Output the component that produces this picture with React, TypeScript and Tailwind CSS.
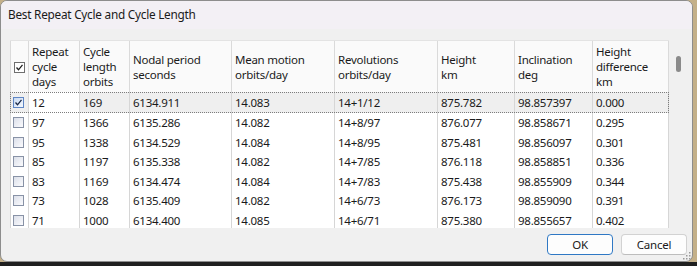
import React from "react";

const cols = [19, 51, 50, 102, 103, 103, 77, 78, 76];

const headers: string[][] = [
  [],
  ["Repeat", "cycle", "days"],
  ["Cycle", "length", "orbits"],
  ["Nodal period", "seconds"],
  ["Mean motion", "orbits/day"],
  ["Revolutions", "orbits/day"],
  ["Height", "km"],
  ["Inclination", "deg"],
  ["Height", "difference", "km"],
];

const rows: string[][] = [
  ["12", "169", "6134.911", "14.083", "14+1/12", "875.782", "98.857397", "0.000"],
  ["97", "1366", "6135.286", "14.082", "14+8/97", "876.077", "98.858671", "0.295"],
  ["95", "1338", "6134.529", "14.084", "14+8/95", "875.481", "98.856097", "0.301"],
  ["85", "1197", "6135.338", "14.082", "14+7/85", "876.118", "98.858851", "0.336"],
  ["83", "1169", "6134.474", "14.084", "14+7/83", "875.438", "98.855909", "0.344"],
  ["73", "1028", "6135.409", "14.082", "14+6/73", "876.173", "98.859090", "0.391"],
  ["71", "1000", "6134.400", "14.085", "14+6/71", "875.380", "98.855657", "0.402"],
];

function Check({ color }: { color: string }) {
  return (
    <svg width="9" height="9" viewBox="0 0 9 9" className="block">
      <polyline points="1.5,4.5 3.5,6.8 7.5,1.8" fill="none" stroke={color} strokeWidth="1.3" />
    </svg>
  );
}

function RowBox({ checked }: { checked?: boolean }) {
  return (
    <div
      className={
        "w-[11px] h-[11px] border flex items-center justify-center " +
        (checked
          ? "border-[#5f86c4] bg-gradient-to-br from-[#c9daf2] to-[#f4f8fe]"
          : "border-[#8892a6] bg-gradient-to-br from-[#dce0ea] to-[#fbfbfd]")
      }
    >
      {checked && <Check color="#1c2a48" />}
    </div>
  );
}

export default function App() {
  return (
    <div className="w-[697px] h-[266px] flex flex-col bg-[#1f1f1f] overflow-hidden text-[11.5px] tracking-[-0.25px]" style={{ fontFamily: '"Noto Sans", "Open Sans", sans-serif' }}>
      <div className="flex h-[262px] bg-[#c4b089]">
        <div className="w-[693px] h-[262px] rounded-[7px] border border-[#8d8d8d] overflow-hidden flex flex-col bg-[#f0f0f0] text-[#1a1a1a]">
          <div className="h-[28px] bg-[#f3f0f5] flex items-center pl-[7px] text-[11.8px]">
            Best Repeat Cycle and Cycle Length
          </div>
          <div className="relative flex-1 flex flex-col">
            <div className="mt-[11px] ml-[9px] w-[678px] h-[188px] flex overflow-hidden">
              <div className="w-[659px] flex flex-col leading-[15px]">
                <div className="h-[52px] flex shrink-0 border-t border-[#e3e3e3] bg-[#fafafa]">
                  {cols.map((w, i) => (
                    <div
                      key={i}
                      style={{ width: w }}
                      className="shrink-0 h-full border-r border-l-0 border-[#dadada] flex flex-col justify-center pl-[3px] first:border-l"
                    >
                      {i === 0 ? (
                        <div className="pt-[1px]">
                          <div className="w-[11px] h-[11px] border border-[#6f6f6f] bg-white flex items-center justify-center">
                            <Check color="#222" />
                          </div>
                        </div>
                      ) : (
                        headers[i].map((t, j) => <div key={j} className="whitespace-nowrap">{t}</div>)
                      )}
                    </div>
                  ))}
                </div>
                {rows.map((r, ri) => (
                  <div
                    key={ri}
                    className={
                      "flex shrink-0 " +
                      (ri === 0
                        ? "h-[21px] bg-[#efefef] outline outline-1 outline-dotted outline-[#7d7d7d] -outline-offset-1"
                        : "h-[19.5px] bg-white")
                    }
                  >
                    <div style={{ width: cols[0] }} className="shrink-0 h-full border-r border-l border-[#d6d6d6] flex items-center pl-[2px]">
                      <RowBox checked={ri === 0} />
                    </div>
                    {r.map((v, ci) => (
                      <div
                        key={ci}
                        style={{ width: cols[ci + 1] }}
                        className={
                          "shrink-0 h-full border-r border-[#d6d6d6] flex items-center pl-[3px] whitespace-nowrap " +
                          (ri === 0 && ci === 0 ? "bg-white" : "")
                        }
                      >
                        {v}
                      </div>
                    ))}
                  </div>
                ))}
              </div>
              <div className="flex-1 pt-[16px] pl-[7px]">
                <div className="w-[5px] h-[16px] rounded-full bg-[#8a8a8a]" />
              </div>
            </div>
            <div className="mt-[6px] flex justify-end gap-[8px] pr-[5px]">
              <button className="w-[66px] h-[21px] rounded-[4px] border border-[#2f78c4] bg-[#fdfdfd] flex items-center justify-center leading-none">
                OK
              </button>
              <button className="w-[66px] h-[21px] rounded-[4px] border border-[#d2d2d2] border-b-[#bdbdbd] bg-[#fdfdfd] flex items-center justify-center leading-none">
                Cancel
              </button>
            </div>
            <svg className="absolute right-[1px] bottom-[1px]" width="8" height="8" viewBox="0 0 8 8">
              <rect x="6" y="0" width="1.5" height="1.5" fill="#9a9a9a" />
              <rect x="3" y="3" width="1.5" height="1.5" fill="#9a9a9a" />
              <rect x="6" y="3" width="1.5" height="1.5" fill="#9a9a9a" />
              <rect x="0" y="6" width="1.5" height="1.5" fill="#9a9a9a" />
              <rect x="3" y="6" width="1.5" height="1.5" fill="#9a9a9a" />
              <rect x="6" y="6" width="1.5" height="1.5" fill="#9a9a9a" />
            </svg>
          </div>
        </div>
        <div className="flex-1" />
      </div>
    </div>
  );
}
